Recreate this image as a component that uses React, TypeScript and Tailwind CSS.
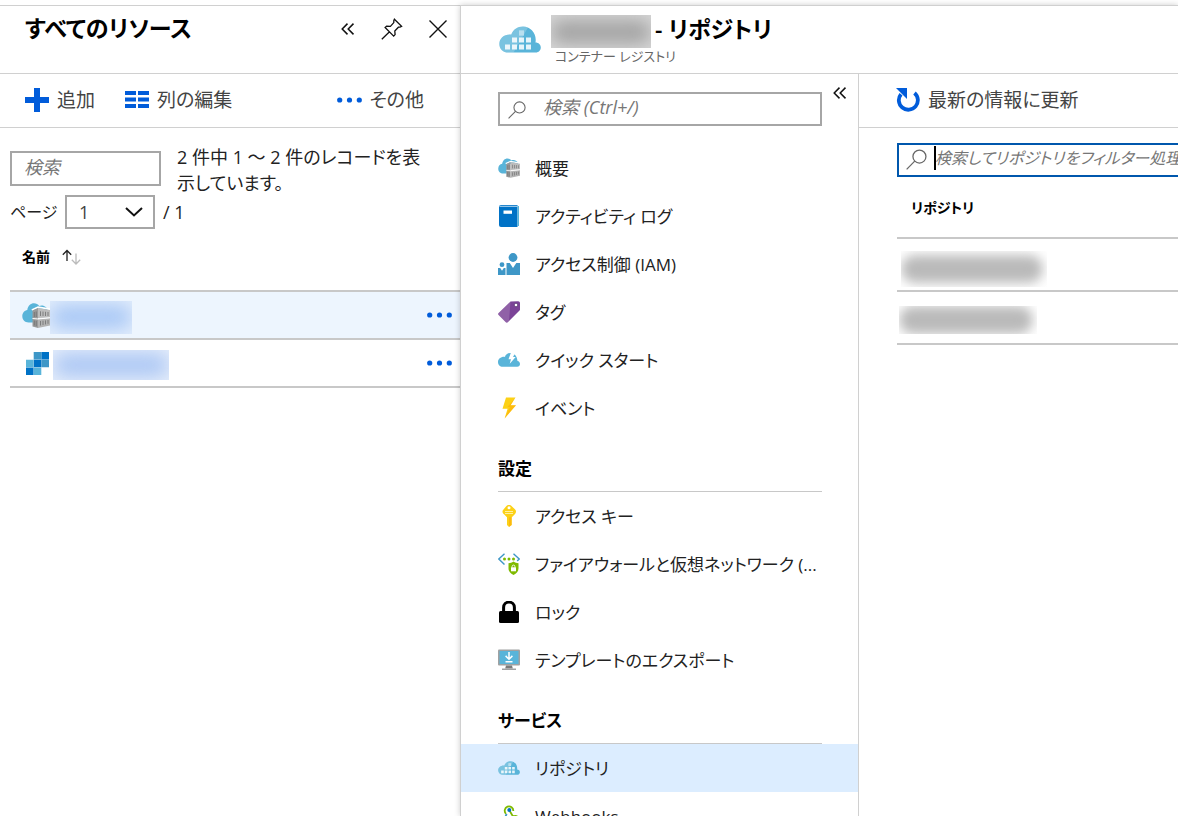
import React from 'react';

const ICON = 'size-[22px] shrink-0';

function ChevronsLeft({ className = '' }: { className?: string }) {
  return (
    <svg viewBox="0 0 14 12" className={`w-[14px] h-[12px] ${className}`} fill="none" stroke="#111" strokeWidth="1.5">
      <path d="M6.5 .6 1.2 6l5.3 5.4M12.5.6 7.2 6l5.3 5.4" />
    </svg>
  );
}

function PinIcon() {
  return (
    <svg viewBox="0 0 22 22" className={ICON} fill="none" stroke="#111" strokeWidth="1.3" strokeLinejoin="miter">
      <path d="M13.4 1.2 20.6 8.4 19 9.2h-1.6l-3.6 3.8.3 3.6-1.4 1.5-8.6-8.6 1.5-1.4 3.8.3L12.8 4.6V2.6zM8 14.2.8 21.2" />
    </svg>
  );
}

function CloseIcon() {
  return (
    <svg viewBox="0 0 18 18" className="size-[18px]" fill="none" stroke="#111" strokeWidth="1.4">
      <path d="M.5.5l17 17M17.5.5l-17 17" />
    </svg>
  );
}

function PlusIcon() {
  return (
    <svg viewBox="0 0 24 24" className="size-6 shrink-0" fill="#015cda">
      <path d="M9 0h6v9h9v6h-9v9H9v-9H0V9h9z" />
    </svg>
  );
}

function ColumnsIcon() {
  return (
    <svg viewBox="0 0 24 17" className="w-6 h-[17px] shrink-0" fill="#015cda">
      <path d="M0 0h11v4H0zM13 0h11v4H13zM0 6.500h11v4H0zM13 6.500h11v4H13zM0 13h11v4H0zM13 13h11v4H13z" />
    </svg>
  );
}

function DotsIcon() {
  return (
    <svg viewBox="0 0 25 6" className="w-[25px] h-[6px] shrink-0" fill="#015cda">
      <circle cx="2.700" cy="3" r="2.600" />
      <circle cx="12.500" cy="3" r="2.600" />
      <circle cx="22.300" cy="3" r="2.600" />
    </svg>
  );
}

function SearchIcon({ className }: { className: string }) {
  return (
    <svg viewBox="0 0 20 20" className={className} fill="none" stroke="#666" strokeWidth="1.2">
      <circle cx="12.800" cy="7.200" r="6.200" />
      <path d="M8.300 11.600.6 19.400" />
    </svg>
  );
}

function RefreshIcon() {
  return (
    <svg viewBox="0 0 24 24" className="size-6 shrink-0">
      <path d="M5 6.200a9.500 9.500 0 1 0 13.500-1.200" fill="none" stroke="#015cda" strokeWidth="3.800" />
      <path d="M0 0h11v11z" fill="#015cda" />
    </svg>
  );
}

function RegistryCloud({ className }: { className: string }) {
  return (
    <svg viewBox="0 0 42 27" className={className}>
      <path d="M36.500 16.600C38 7 31.500.4 24 .4c-5.600 0-10 3-11.700 8.200C5 8 .3 12.400.3 18c0 5 4 8.600 8.800 8.600h27.700c2.900 0 5-2.200 5-5s-2.200-5-5.300-5z" fill="#59b4d9" />
      <path d="M24 .4c-5.600 0-10 3-11.700 8.200C5 8 .3 12.400.3 18c0 5 4 8.600 8.800 8.600h5.500L29 1.500C27.500.8 25.800.4 24 .4z" fill="#fff" fillOpacity=".2" />
      <path d="M20 4.500h5v5h-5zM13 11.500h5v5h-5zM27 11.500h5v5h-5zM6 18.500h5v5H6zM20 18.500h5v5h-5zM27 18.500h5v5h-5z" fill="#fff" fillOpacity=".85" />
      <path d="M20 11.500h5v5h-5zM13 18.500h5v5h-5z" fill="#fff" fillOpacity=".85" />
      <path d="M20 4.500h5v5h-5z" fill="#59b4d9" fillOpacity=".35" />
    </svg>
  );
}

function ContainerCloud({ className }: { className: string }) {
  return (
    <svg viewBox="0 0 28 27" className={className}>
      <path d="M6.500 20.500C3 20.500.3 17.800.3 14.300c0-3.300 2.200-5.700 5-6.200C5.800 4 8.700 1.300 12 1.300c2.200 0 4 1 5.200 2.600 2.600-1.200 7.300-.4 8.700 4.500L13 8.500v12z" fill="#59b4d9" />
      <path d="M9.800 8 16 5.200l12.200 2" fill="none" stroke="#fff" strokeWidth="1.600" />
      <path d="M10.500 8.500 16 6v20l-5.500-1.500z" fill="#9a9a9a" />
      <path d="M16 6l12 2v7.500l-12 .5z" fill="#bdbdbd" />
      <path d="M16 17l12-1v7.500L16 26z" fill="#b3b3b3" />
      <path d="M10.500 16.500 16 17l12-1.200" fill="none" stroke="#fff" strokeWidth="1" />
      <path d="M12.300 10v5M14.200 9.500V15M12.300 18.500v5M14.200 18.800v5.500M18.500 9.300V14M21 9.600V14M23.500 9.800V14M26 10V14M18.500 19v4.500M21 18.700v4.300M23.500 18.400v4M26 18v3.800" stroke="#6e6e6e" strokeWidth=".8" />
    </svg>
  );
}

function BlocksIcon() {
  return (
    <svg viewBox="0 0 23 23" className="size-[23px] shrink-0 ml-1">
      <path d="M7.700 0h7.600v7.600H7.700zM15.400 7.700H23v7.600h-7.600z" fill="#3e97c7" />
      <path d="M15.400 0H23v7.600h-7.600zM7.700 7.700h7.600v7.600H7.700zM0 15.400h7.600V23H0z" fill="#0072c6" />
      <path d="M0 7.700h7.600v7.600H0zM7.700 15.400h7.600V23H7.700z" fill="#59b4d9" />
    </svg>
  );
}

function LogIcon() {
  return (
    <svg viewBox="0 0 22 22" className={ICON}>
      <path d="M3 0h16.500v22H3a2 2 0 0 1-2-2V2a2 2 0 0 1 2-2z" fill="#0072c6" />
      <path d="M19.500 1H21v20h-1.500z" fill="#59b4d9" />
      <path d="M1.500 1.300h18" stroke="#cfe6f5" strokeWidth=".9" />
      <path d="M5.500 5.500H14v3.300H5.500z" fill="#fff" />
    </svg>
  );
}

function PeopleIcon() {
  return (
    <svg viewBox="0 0 22 22" className={ICON}>
      <circle cx="15" cy="4.500" r="4.400" fill="#3e97c7" />
      <path d="M8.500 10h3.300l3.200 5 3.300-5H22v12H8.500z" fill="#3e97c7" />
      <circle cx="4" cy="11.700" r="2.400" fill="#3e97c7" />
      <path d="M0 15h2.200L4 17.700 5.800 15H7.500v7H0z" fill="#3e97c7" />
    </svg>
  );
}

function TagIcon() {
  return (
    <svg viewBox="0 0 22 22" className={ICON}>
      <path d="M12.500.5 20 .2a1.900 1.900 0 0 1 2 2V9L9.800 21.200a1.500 1.500 0 0 1-2 0L.6 14a1.500 1.500 0 0 1 0-2.100z" fill="#7b4397" />
      <path d="M12.500.5.6 11.900a1.500 1.500 0 0 0 0 2.100l7.200 7.200c.6.5 1.400.5 2 0L11 20z" fill="#fff" fillOpacity=".16" />
      <circle cx="18" cy="4" r="1.800" fill="#fff" stroke="#4f2a66" strokeWidth=".7" />
    </svg>
  );
}

function QuickStartIcon() {
  return (
    <svg viewBox="0 0 22 22" className={ICON}>
      <path d="M19.500 12C19 6.500 16 3.800 12 4 9.300 4.200 7.600 5.600 6.900 7.900 3 7.500 0 10 0 13c0 2.700 2 4.800 4.700 4.800h14.500c1.700 0 2.800-1.200 2.800-2.800 0-1.500-1-2.800-2.500-3z" fill="#59b4d9" />
      <path d="M12.800 4h4.500l-2.300 4h2.700l-6 6.700L13 10.200h-2.500z" fill="#fff" />
    </svg>
  );
}

function BoltIcon() {
  return (
    <svg viewBox="0 0 22 22" className={ICON}>
      <path d="M8 .5h9.500L12.600 8.200H18L6.600 21.500l3-9.700H4.500z" fill="#fcd116" />
      <path d="M17.500.5 12.600 8.200H18L6.600 21.500 12 10H9.500z" fill="#ff9b00" fillOpacity=".4" />
    </svg>
  );
}

function KeyIcon() {
  return (
    <svg viewBox="0 0 22 22" className={ICON}>
      <path d="M11 0c1.200 0 2 .4 3 1.400l2.700 2.700c1 1 1.300 1.600 1.300 2.600s-.4 1.700-1.200 2.500l-3 3V20L11 22l-2-2V12.200l-3-3C5.100 8.400 4.500 7.700 4.500 6.700S5 5 5.900 4.100L8 1.400C9 .4 9.800 0 11 0z" fill="#fcd116" />
      <path d="M11 12.200h2.500V20L11 22z" fill="#ff8c00" fillOpacity=".35" />
      <circle cx="11" cy="2.800" r="1.500" fill="#fff" />
      <path d="M7 6.500h8M7 8.500h8" stroke="#fff3b0" strokeWidth=".9" />
    </svg>
  );
}

function FirewallIcon() {
  return (
    <svg viewBox="0 0 22 22" className={ICON}>
      <path d="M6.500.8.8 6l5.700 5.600M15.500.8 21.200 6l-2 2" fill="none" stroke="#3e97c7" strokeWidth="1.400" />
      <circle cx="6.500" cy="6" r="1.500" fill="#7fba00" />
      <circle cx="11" cy="6" r="1.500" fill="#7fba00" />
      <circle cx="15.500" cy="6" r="1.500" fill="#7fba00" />
      <path d="M15.500 8.600c1.700 1.200 3.200 1.500 5 1.600v5c0 3.300-2 5.300-5 6.800-3-1.500-5-3.500-5-6.800v-5c1.800-.1 3.300-.4 5-1.600z" fill="#7fba00" />
      <path d="M13 14.300h5v4h-5z" fill="#fff" />
      <path d="M14.100 14.500v-1a1.400 1.400 0 0 1 2.800 0v1" fill="none" stroke="#fff" strokeWidth=".9" />
    </svg>
  );
}

function LockIcon() {
  return (
    <svg viewBox="0 0 22 22" className={ICON}>
      <path d="M5.600 11V6.500a5.400 5.400 0 0 1 10.800 0V11" fill="none" stroke="#000" strokeWidth="3" />
      <rect x="1" y="10" width="20" height="12" rx="1.500" />
    </svg>
  );
}

function ExportIcon() {
  return (
    <svg viewBox="0 0 22 22" className={ICON}>
      <rect x="0" y=".5" width="22" height="16" rx="1" fill="#a0a1a2" />
      <path d="M1.500 2h19v13h-19z" fill="#59b4d9" />
      <path d="M8 16.500h6l.8 3H7.200z" fill="#7a7a7a" />
      <path d="M4 19.500h14V21H4z" fill="#a0a1a2" />
      <path d="M11 3v7M7.600 6.900 11 10.200l3.400-3.300M7.500 12.700h7" fill="none" stroke="#fff" strokeWidth="1.500" />
    </svg>
  );
}

function WebhookIcon() {
  return (
    <svg viewBox="0 0 22 22" className={ICON} fill="none" strokeWidth="1.800">
      <path d="M8 8.800A4.300 4.300 0 1 1 15.300 6" stroke="#7fba00" />
      <path d="M11.500 5.500 15 11.500a4.500 4.500 0 1 1-1 7.500" stroke="#7fba00" />
      <path d="M8.700 9 5.500 15.500M15 16.500H9a4 4 0 1 1-4-4" stroke="#3e97c7" />
      <circle cx="11.300" cy="5" r="2" fill="#0072c6" />
    </svg>
  );
}

/* Redacted names are shown as a soft smear inside a clipped box. */
function Redacted({ box, smear }: { box: string; smear: string }) {
  return (
    <span aria-hidden="true" className={`flex shrink-0 items-center overflow-hidden ${box}`}>
      <span className={`block w-full ${smear}`} />
    </span>
  );
}

function ToolbarButton({ icon, label }: { icon: React.ReactNode; label: string }) {
  return (
    <button type="button" className="flex items-center gap-2 whitespace-nowrap text-[19px] text-[#444]">
      {icon}
      <span className="pt-[2px]">{label}</span>
    </button>
  );
}

function ResourceRow({ icon, name, selected }: { icon: React.ReactNode; name: React.ReactNode; selected?: boolean }) {
  return (
    <tr className={`border-y-2 border-[#c8c8c8] ${selected ? 'bg-[#edf5fe]' : 'bg-white'}`}>
      <td className="h-12 p-0 pl-3">
        <div className="flex items-center">
          <span className="flex w-[31px] shrink-0 items-center">{icon}</span>
          {name}
        </div>
      </td>
      <td className="p-0 pr-2">
        <button type="button" aria-label="コンテキスト メニュー" className="ml-auto block">
          <DotsIcon />
        </button>
      </td>
    </tr>
  );
}

function ResourcePanel() {
  return (
    <section className="flex w-[460px] shrink-0 flex-col border-t border-[#d0d0d0]">
      <header className="flex h-[68px] items-center border-b border-[#d0d0d0] pr-[13px] pb-[22px] pl-[25px]">
        <h1 className="mr-auto text-[23px] font-semibold text-black">すべてのリソース</h1>
        <div className="flex items-center gap-[26px]">
          <button type="button" aria-label="折りたたむ"><ChevronsLeft /></button>
          <button type="button" aria-label="ピン留め"><PinIcon /></button>
          <button type="button" aria-label="閉じる"><CloseIcon /></button>
        </div>
      </header>
      <div className="flex h-[54px] items-center border-b border-[#d0d0d0] pr-9 pb-[2px] pl-[25px]">
        <ToolbarButton icon={<PlusIcon />} label="追加" />
        <div className="ml-[30px]"><ToolbarButton icon={<ColumnsIcon />} label="列の編集" /></div>
        <div className="ml-auto"><ToolbarButton icon={<DotsIcon />} label="その他" /></div>
      </div>
      <div className="pt-4 pl-[10px]">
        <div className="flex items-start gap-4 text-[18px] leading-[26px] text-[#222]">
          <input
            type="text"
            aria-label="検索"
            placeholder="検索"
            className="mt-[7px] h-[35px] w-[151px] shrink-0 border-2 border-[#a6a6a6] px-3 pb-1 outline-none placeholder:italic placeholder:text-[#767676]"
          />
          <p className="w-[250px]">2 件中 1 ～ 2 件のレコードを表示しています。</p>
        </div>
        <div className="-mt-px flex h-[34px] items-center text-[18px] text-[#222]">
          <label htmlFor="page" className="w-[55px] text-[16px]">ページ</label>
          <div className="relative h-full w-[90px]">
            <select id="page" className="size-full appearance-none border-2 border-[#a6a6a6] bg-white pl-3 text-[#444] outline-none">
              <option>1</option>
            </select>
            <svg viewBox="0 0 18 10" className="pointer-events-none absolute top-3 right-3 h-[10px] w-[18px]" fill="none" stroke="#111" strokeWidth="2">
              <path d="M1 1l8 7.500L17 1" />
            </svg>
          </div>
          <span className="pl-2">/ 1</span>
        </div>
        <table className="w-full border-collapse">
          <thead>
            <tr>
              <th colSpan={2} className="h-[62px] p-0 pl-3 text-left text-[14px] font-semibold text-black">
                <button type="button" className="flex items-center gap-3 pb-[6px]">
                  名前
                  <svg viewBox="0 0 19 16" className="h-4 w-[19px]" fill="none" strokeWidth="1.300">
                    <path d="M5 12V1.500M.8 5.700 5 1.500l4.200 4.200" stroke="#222" />
                    <path d="M14 4.500V15M9.800 10.800 14 15l4.200-4.200" stroke="#bbb" />
                  </svg>
                </button>
              </th>
            </tr>
          </thead>
          <tbody>
            <ResourceRow
              selected
              icon={<ContainerCloud className="h-[27px] w-7" />}
              name={<Redacted box="-ml-[3px] mt-1 h-[33px] w-[82px] bg-[#e2edfc]" smear="h-6 rounded-full bg-[#a9c8f5] blur-[9px]" />}
            />
            <ResourceRow
              icon={<BlocksIcon />}
              name={<Redacted box="mt-1 h-[30px] w-[116px] bg-[#e6eefb]" smear="h-6 rounded-full bg-[#adc8f4] blur-[9px]" />}
            />
          </tbody>
        </table>
      </div>
    </section>
  );
}

type Item = { label: string; icon: React.ReactNode; active?: boolean };

const general: Item[] = [
  { label: '概要', icon: <ContainerCloud className="size-[22px] shrink-0" /> },
  { label: 'アクティビティ ログ', icon: <LogIcon /> },
  { label: 'アクセス制御 (IAM)', icon: <PeopleIcon /> },
  { label: 'タグ', icon: <TagIcon /> },
  { label: 'クイック スタート', icon: <QuickStartIcon /> },
  { label: 'イベント', icon: <BoltIcon /> },
];

const settings: Item[] = [
  { label: 'アクセス キー', icon: <KeyIcon /> },
  { label: 'ファイアウォールと仮想ネットワーク (...', icon: <FirewallIcon /> },
  { label: 'ロック', icon: <LockIcon /> },
  { label: 'テンプレートのエクスポート', icon: <ExportIcon /> },
];

const services: Item[] = [
  { label: 'リポジトリ', icon: <RegistryCloud className="h-[22px] w-[22px] shrink-0" />, active: true },
  { label: 'Webhooks', icon: <WebhookIcon /> },
];

function MenuGroup({ title, items }: { title?: string; items: Item[] }) {
  return (
    <div>
      {title && (
        <h2 className="mr-9 ml-[37px] flex h-[60px] items-center border-b border-[#c8c8c8] pt-[14px] text-[17px] font-semibold text-black">{title}</h2>
      )}
      <ul>
        {items.map((item) => (
          <li key={item.label}>
            <a href="#" className={`flex h-12 items-center gap-[15px] pr-9 pl-[37px] text-[17px] whitespace-nowrap text-[#222] ${item.active ? 'bg-[#dcedff]' : ''}`}>
              {item.icon}
              <span className="pt-[2px]">{item.label}</span>
            </a>
          </li>
        ))}
      </ul>
    </div>
  );
}

function Menu() {
  return (
    <nav className="flex w-[398px] shrink-0 flex-col overflow-hidden border-r border-[#d0d0d0]">
      <div className="flex h-[70px] shrink-0 items-start pl-[37px]">
        <div className="relative mt-[18px] w-[324px]">
          <SearchIcon className="pointer-events-none absolute top-[9px] left-[10px] size-[18px]" />
          <input
            type="text"
            aria-label="メニューの検索"
            placeholder="検索 (Ctrl+/)"
            className="block h-[34px] w-full border-2 border-[#a6a6a6] pb-1 pl-[43px] text-[18px] outline-none placeholder:italic placeholder:text-[#767676]"
          />
        </div>
        <button type="button" aria-label="メニューを折りたたむ" className="mt-[13px] ml-[11px]"><ChevronsLeft /></button>
      </div>
      <MenuGroup items={general} />
      <MenuGroup title="設定" items={settings} />
      <MenuGroup title="サービス" items={services} />
    </nav>
  );
}

function RepositoryList() {
  return (
    <div className="min-w-0 flex-1 overflow-hidden">
      <div className="flex h-[54px] items-center border-b border-[#d0d0d0] pb-[2px] pl-[37px]">
        <ToolbarButton icon={<RefreshIcon />} label="最新の情報に更新" />
      </div>
      <div className="w-full min-w-[480px] pt-[15px] pl-[38px]">
        <div className="relative">
          <SearchIcon className="pointer-events-none absolute top-[6px] left-[9px] size-[21px]" />
          <input
            type="text"
            aria-label="リポジトリの検索"
            placeholder="検索してリポジトリをフィルター処理..."
            className="block h-[34px] w-full border-2 border-[#0057ad] pb-1 pl-9 text-[16px] outline-none placeholder:italic placeholder:text-[#767676]"
          />
          <span aria-hidden="true" className="absolute top-[3px] left-[37px] h-6 w-[2px] bg-black" />
        </div>
        <table className="w-full border-collapse">
          <thead>
            <tr className="border-b-2 border-[#c8c8c8]">
              <th className="h-[61px] p-0 pl-[14px] text-left text-[14px] font-semibold text-black">リポジトリ</th>
            </tr>
          </thead>
          <tbody>
            <tr className="border-b-2 border-[#c8c8c8]">
              <td className="h-[53px] p-0 pl-1">
                <Redacted box="mt-2 h-9 w-[146px]" smear="mr-1 h-7 rounded-full bg-[#bababa] blur-[6px]" />
              </td>
            </tr>
            <tr className="border-b-2 border-[#c8c8c8]">
              <td className="h-[53px] p-0 pl-[2px]">
                <Redacted box="mt-1 h-7 w-[138px]" smear="mr-1 h-7 rounded-full bg-[#bababa] blur-[6px]" />
              </td>
            </tr>
          </tbody>
        </table>
      </div>
    </div>
  );
}

export default function App() {
  return (
    <div className="flex h-screen overflow-hidden bg-white pt-[5px] font-['Open_Sans','Noto_Sans_CJK_JP',sans-serif] [font-feature-settings:'palt']">
      <ResourcePanel />
      <section className="flex min-w-0 flex-1 flex-col border-t border-l border-[#d0d0d0] shadow-[0_0_6px_rgba(0,0,0,0.2)]">
        <header className="flex h-[68px] shrink-0 items-start border-b border-[#d0d0d0] pl-[38px]">
          <RegistryCloud className="mt-5 h-[27px] w-[42px] shrink-0" />
          <div className="ml-[10px]">
            <div className="flex h-[42px] items-center gap-1">
              <Redacted box="mt-[9px] h-[33px] w-[100px] bg-[#d6d6d6]" smear="h-6 rounded-full bg-[#a6a6a6] blur-[8px]" />
              <h1 className="pt-1 text-[23px] font-semibold whitespace-nowrap text-black">- リポジトリ</h1>
            </div>
            <p className="pl-1 text-[13px] leading-4 text-[#666]">コンテナー レジストリ</p>
          </div>
        </header>
        <div className="flex min-h-0 flex-1">
          <Menu />
          <RepositoryList />
        </div>
      </section>
    </div>
  );
}
